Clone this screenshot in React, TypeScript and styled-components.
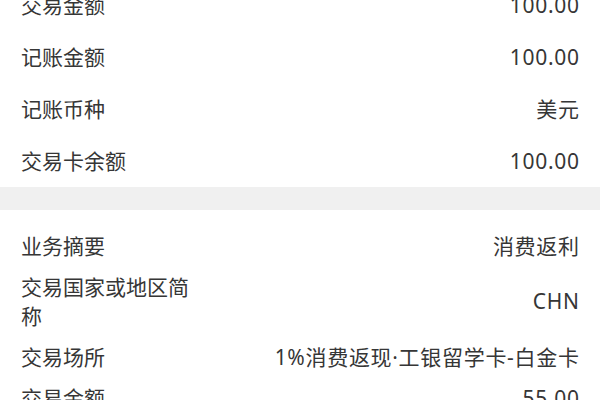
import styled, { createGlobalStyle } from "styled-components";

const GlobalStyle = createGlobalStyle`
  html, body {
    margin: 0;
    padding: 0;
    background: #ffffff;
    overflow: hidden;
  }
  body {
    font-family: "Noto Sans", "Noto Sans CJK SC", sans-serif;
    color: #363636;
  }
`;

const Page = styled.div`
  width: 600px;
  height: 400px;
  overflow: hidden;
  background: #ffffff;
`;

const Section = styled.div<{ $offset?: number; $padTop?: number }>`
  display: flex;
  flex-direction: column;
  margin-top: ${(p) => p.$offset ?? 0}px;
  padding-top: ${(p) => p.$padTop ?? 0}px;
`;

const Divider = styled.div`
  height: 23px;
  background: #f0f0f0;
`;

const Row = styled.div<{ $pad: number }>`
  display: flex;
  align-items: center;
  justify-content: space-between;
  gap: 16px;
  padding: ${(p) => p.$pad}px 21px;
  font-size: 21px;
  line-height: 29px;
`;

const Label = styled.div`
  max-width: 180px;
  flex-shrink: 0;
`;

const Value = styled.div`
  flex: 1;
  text-align: right;
  white-space: nowrap;
  letter-spacing: 0.7px;
  margin-right: -0.7px;
`;

const topRows = [
  ["交易金额", "100.00"],
  ["记账金额", "100.00"],
  ["记账币种", "美元"],
  ["交易卡余额", "100.00"],
];

const bottomRows = [
  ["业务摘要", "消费返利"],
  ["交易国家或地区简称", "CHN"],
  ["交易场所", "1%消费返现·工银留学卡-白金卡"],
  ["交易金额", "55.00"],
];

export default function App() {
  return (
    <>
      <GlobalStyle />
      <Page>
        <Section $offset={-21}>
          {topRows.map(([label, value]) => (
            <Row key={label} $pad={11.5}>
              <Label>{label}</Label>
              <Value>{value}</Value>
            </Row>
          ))}
        </Section>
        <Divider />
        <Section $padTop={15.5}>
          {bottomRows.map(([label, value], i) => (
            <Row key={i} $pad={6}>
              <Label>{label}</Label>
              <Value>{value}</Value>
            </Row>
          ))}
        </Section>
      </Page>
    </>
  );
}
